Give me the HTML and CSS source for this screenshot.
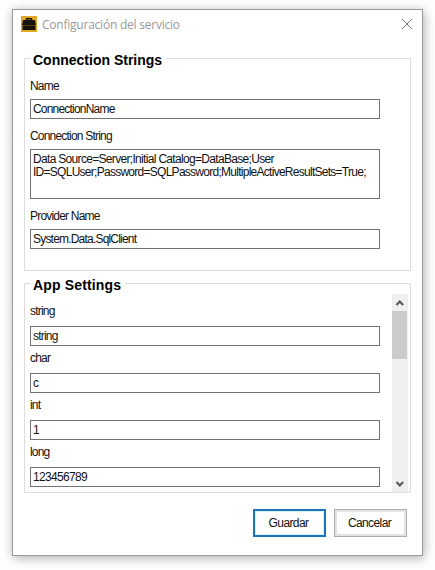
FILE: index.html
```
<!DOCTYPE html>
<html lang="es">
<head>
<meta charset="utf-8">
<title>Configuración del servicio</title>
<link rel="stylesheet" href="styles.css">
</head>
<body>
<main class="window">
  <header class="titlebar">
    <svg class="app-icon" width="16" height="16" viewBox="0 0 16 16">
      <rect width="16" height="16" fill="#dfa827"/>
      <path d="M5.5 4.5V2.8h5v1.7" fill="none" stroke="#17120b" stroke-width="1.4"/>
      <path d="M2 4h12l1 5H1zM1.5 9.8h13V14h-13z" fill="#17120b"/>
      <path d="M1.5 9.4h13" stroke="#3c2d14" stroke-width=".9"/>
    </svg>
    <h1>Configuración del servicio</h1>
    <svg class="close" width="12" height="12" viewBox="0 0 12 12"><path d="M1 1l10 10M11 1L1 11" stroke="#777" fill="none"/></svg>
  </header>
  <section class="group connection">
    <h2 class="t-conn">Connection Strings</h2>
    <label>Name</label>
    <div class="input"><span>ConnectionName</span></div>
    <label>Connection String</label>
    <div class="input area"><span class="v-line1">Data Source=Server;Initial Catalog=DataBase;User</span><span class="v-line2">ID=SQLUser;Password=SQLPassword;MultipleActiveResultSets=True;</span></div>
    <label>Provider Name</label>
    <div class="input"><span>System.Data.SqlClient</span></div>
  </section>
  <section class="group settings">
    <h2 class="t-app">App Settings</h2>
    <div class="scroll">
      <div class="fields">
        <label>string</label>
        <div class="input"><span>string</span></div>
        <label>char</label>
        <div class="input"><span>c</span></div>
        <label>int</label>
        <div class="input"><span>1</span></div>
        <label>long</label>
        <div class="input"><span class="v-num">123456789</span></div>
      </div>
      <div class="scrollbar">
        <svg width="16" height="17" viewBox="0 0 16 17"><path d="M4.5 11L7.8 7.5L11.1 11" fill="none" stroke="#555" stroke-width="2"/></svg>
        <div class="thumb"></div>
        <svg width="16" height="17" viewBox="0 0 16 17"><path d="M4.5 7L7.8 10.5L11.1 7" fill="none" stroke="#555" stroke-width="2"/></svg>
      </div>
    </div>
  </section>
  <footer class="actions">
    <button class="primary">Guardar</button>
    <button>Cancelar</button>
  </footer>
</main>
</body>
</html>
```
FILE: styles.css
```
* { box-sizing: border-box; }
body {
  margin: 0;
  padding: 9px 0 0 12px;
  height: 570px;
  overflow: hidden;
  background: #fefefe;
  color: #111;
  font: 12px/14px "Liberation Sans", Arial, sans-serif;
  letter-spacing: -.8px;
}
.window {
  width: 411px;
  height: 547px;
  border: 1px solid #999;
  background: #fff;
  box-shadow: 1px 2px 10px rgba(0, 0, 0, .32);
}
.titlebar {
  display: flex;
  align-items: center;
  height: 28px;
  padding: 0 9px 0 8px;
}
.titlebar h1 {
  flex: 1;
  margin: 2px 0 0 5px;
  color: #999;
  font: 12px/16px "Open Sans", "Noto Sans", sans-serif;
  letter-spacing: -.23px;
}
.group {
  width: 387px;
  margin-left: 11px;
  padding-left: 5px;
  border: 1px solid #dcdcdc;
}
.connection { height: 213px; margin-top: 20px; }
.settings { height: 210px; margin-top: 12px; }
.group h2 {
  width: fit-content;
  height: 18px;
  margin: -8px 0 0 1px;
  padding: 0 4px 0 2px;
  background: #fff;
  color: #000;
  font: bold 14px/18px "Liberation Sans", Arial, sans-serif;
  letter-spacing: 0;
  white-space: nowrap;
}
.group .t-app { letter-spacing: .15px; }
label { display: block; height: 14px; }
.connection label { margin: 10px 0 6px; }
.input {
  width: 350px;
  height: 20px;
  padding: 3px 0 0 2px;
  border: 1px solid #737373;
  background: #fff;
  white-space: nowrap;
}
.input span { display: block; height: 13px; line-height: 13px; }
.input .v-line1 { letter-spacing: -.68px; }
.input .v-line2 { letter-spacing: -.73px; }
.input .v-num { letter-spacing: -.68px; }
.area { height: 50px; }
.scroll { display: flex; gap: 12px; }
.fields { padding-top: 10px; }
.fields label { margin: 5px 0 8px; }
.fields label:first-child { margin-top: 0; }
.scrollbar {
  display: flex;
  flex-direction: column;
  width: 16px;
  height: 198px;
  background: #efefef;
}
.scrollbar svg { display: block; flex: none; }
.scrollbar svg:last-child { margin-top: auto; }
.thumb { width: 15px; height: 48px; background: #cbcbcb; }
.actions {
  display: flex;
  justify-content: flex-end;
  gap: 8px;
  margin: 16px 15px 0 0;
}
button {
  width: 73px;
  height: 28px;
  padding: 0 2px 0 0;
  border: 1px solid #adadad;
  box-shadow: inset 0 0 0 2px #e4e4e4;
  background: #fff;
  color: #111;
  font: inherit;
  letter-spacing: -.6px;
}
.primary { border: 2px solid #1f74b8; box-shadow: inset 0 0 0 1px #d8effa; }
```
